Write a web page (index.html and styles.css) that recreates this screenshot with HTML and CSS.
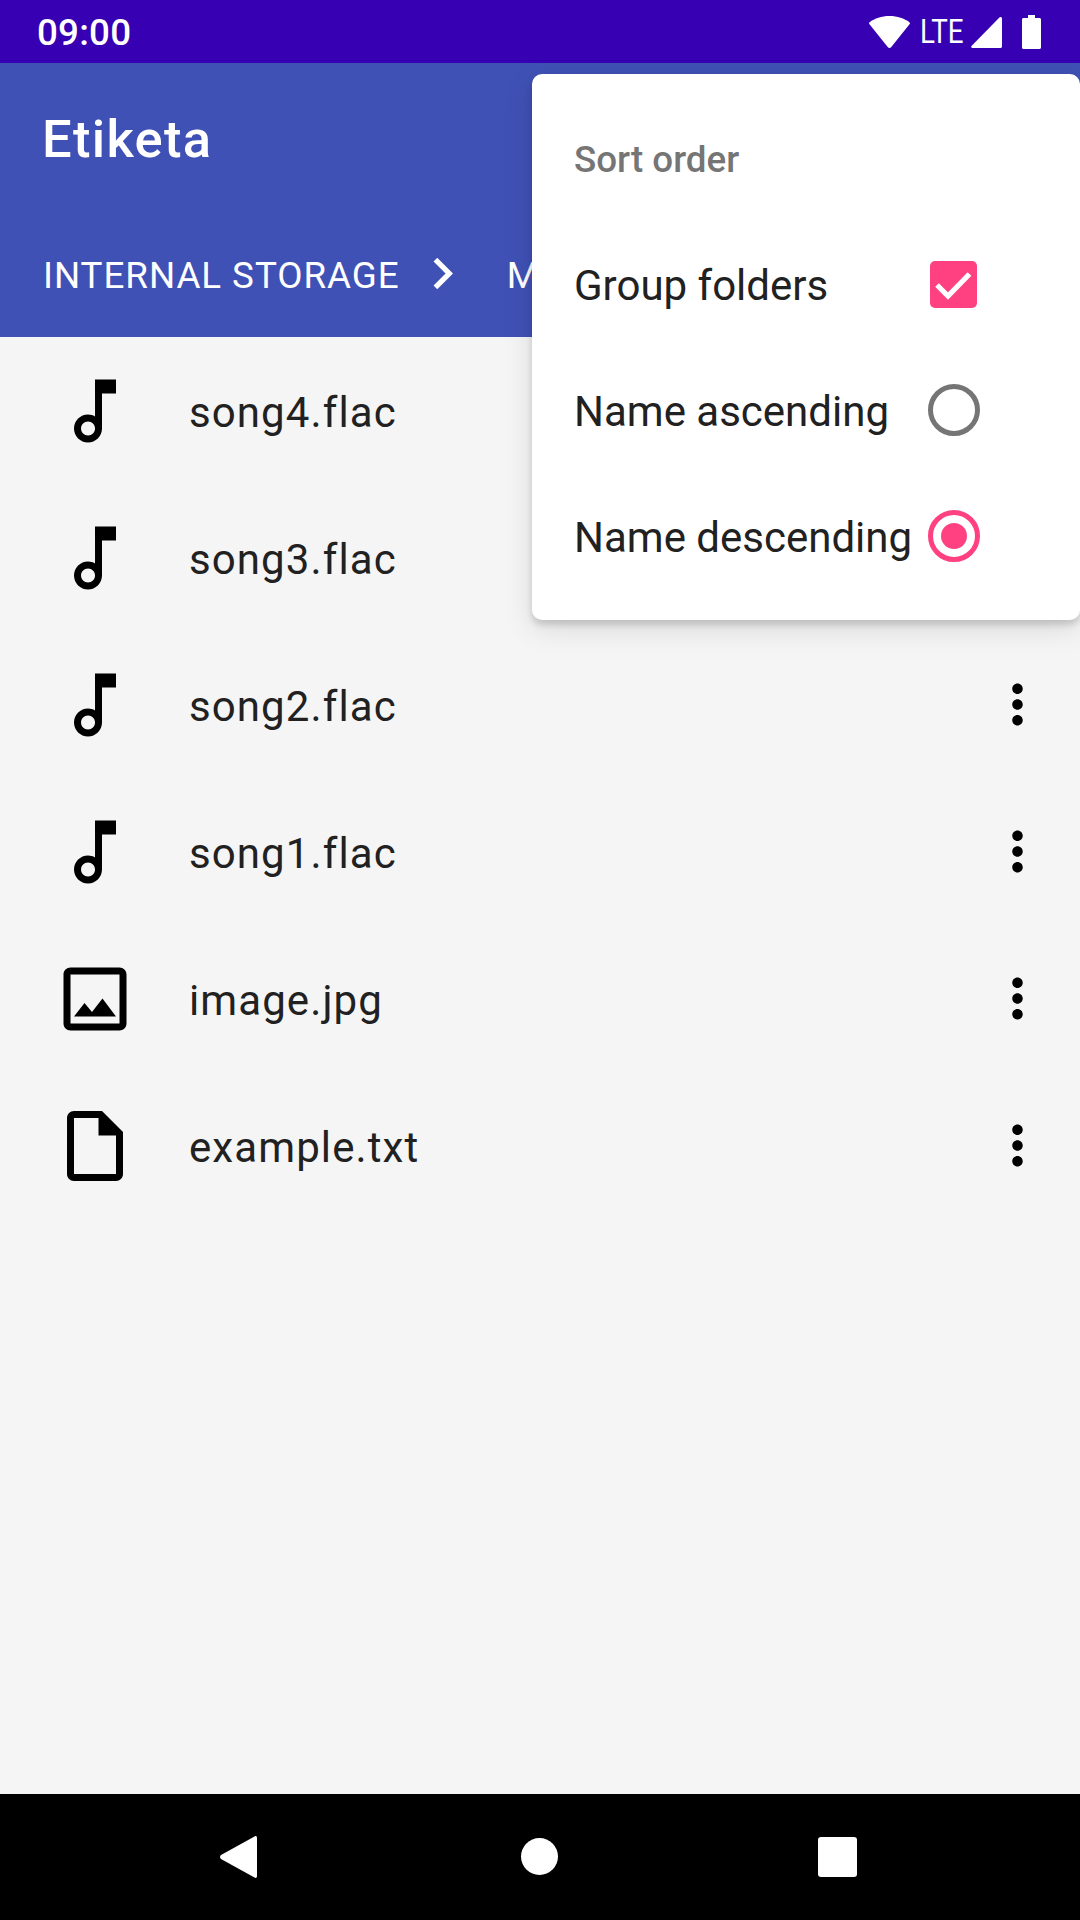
FILE: index.html
```html
<!DOCTYPE html>
<html lang="en">
	<head>

		<meta charset="UTF-8">
		<title>Etiketa</title>

		<link rel="stylesheet" href="styles.css">

	</head>
	<body>

		<div class="app">

			<div class="status-bar">
				<span class="status-time">09:00</span>
				<div class="status-icons">
					<svg class="icon-wifi" viewBox="0 0 41 32"><path d="M20.5 0C12.6 0 5.6 2.4.6 6.2c-.6.5-.7 1.2-.3 1.8l18.6 23.2c.8 1 2.4 1 3.2 0L40.700 8c.4-.6.3-1.300-.3-1.800C35.400 2.400 28.400 0 20.500 0z"/></svg>
					<span class="status-lte">LTE</span>
					<svg class="icon-signal" viewBox="0 0 31 31"><path d="M29.500 0c.8 0 1.500.7 1.500 1.500V29.500c0 .8-.7 1.500-1.500 1.500H1.500C.3 31-.3 29.800.5 29L28.400.5c.3-.3.7-.5 1.100-.5z"/></svg>
					<svg class="icon-battery" viewBox="0 0 19 34"><path d="M6 0h7v3h4.500c.8 0 1.500.7 1.500 1.500v28c0 .8-.7 1.500-1.500 1.500h-16C.7 34 0 33.300 0 32.500v-28C0 3.700.7 3 1.500 3H6z"/></svg>
				</div>
			</div>

			<div class="toolbar">
				<div class="toolbar-title">Etiketa</div>
				<div class="breadcrumbs">
					<span>INTERNAL STORAGE</span>
					<svg class="icon-next" viewBox="0 0 24 24"><path d="M10 6L8.590 7.410 13.170 12l-4.580 4.590L10 18l6-6z"/></svg>
					<span>MUSIC</span>
				</div>
			</div>

			<ul class="file-list">
				<li class="file-row">
					<svg class="file-icon" viewBox="0 0 24 24"><path d="M12 3l.010 10.550c-.590-.340-1.270-.550-2-.550C7.790 13 6 14.790 6 17s1.790 4 4 4 4-1.790 4-4V7h4V3h-6zm-1.990 16c-1.100 0-2-.900-2-2s.900-2 2-2 2 .900 2 2-.900 2-2 2z"/></svg>
					<span class="file-name">song4.flac</span>
				</li>
				<li class="file-row">
					<svg class="file-icon" viewBox="0 0 24 24"><path d="M12 3l.010 10.550c-.590-.340-1.270-.550-2-.550C7.790 13 6 14.790 6 17s1.790 4 4 4 4-1.790 4-4V7h4V3h-6zm-1.990 16c-1.100 0-2-.900-2-2s.900-2 2-2 2 .900 2 2-.900 2-2 2z"/></svg>
					<span class="file-name">song3.flac</span>
				</li>
				<li class="file-row">
					<svg class="file-icon" viewBox="0 0 24 24"><path d="M12 3l.010 10.550c-.590-.340-1.270-.550-2-.550C7.790 13 6 14.790 6 17s1.790 4 4 4 4-1.790 4-4V7h4V3h-6zm-1.990 16c-1.100 0-2-.900-2-2s.900-2 2-2 2 .900 2 2-.900 2-2 2z"/></svg>
					<span class="file-name">song2.flac</span>
					<svg class="more-icon" viewBox="0 0 24 24"><path d="M12 8c1.100 0 2-.900 2-2s-.900-2-2-2-2 .900-2 2 .900 2 2 2zm0 2c-1.100 0-2 .900-2 2s.900 2 2 2 2-.900 2-2-.900-2-2-2zm0 6c-1.100 0-2 .900-2 2s.900 2 2 2 2-.900 2-2-.900-2-2-2z"/></svg>
				</li>
				<li class="file-row">
					<svg class="file-icon" viewBox="0 0 24 24"><path d="M12 3l.010 10.550c-.590-.340-1.270-.550-2-.550C7.790 13 6 14.790 6 17s1.790 4 4 4 4-1.790 4-4V7h4V3h-6zm-1.990 16c-1.100 0-2-.900-2-2s.900-2 2-2 2 .900 2 2-.900 2-2 2z"/></svg>
					<span class="file-name">song1.flac</span>
					<svg class="more-icon" viewBox="0 0 24 24"><path d="M12 8c1.100 0 2-.900 2-2s-.900-2-2-2-2 .900-2 2 .900 2 2 2zm0 2c-1.100 0-2 .900-2 2s.900 2 2 2 2-.900 2-2-.900-2-2-2zm0 6c-1.100 0-2 .900-2 2s.900 2 2 2 2-.900 2-2-.900-2-2-2z"/></svg>
				</li>
				<li class="file-row">
					<svg class="file-icon" viewBox="0 0 24 24"><path d="M19 5v14H5V5h14m0-2H5c-1.100 0-2 .900-2 2v14c0 1.100.900 2 2 2h14c1.100 0 2-.900 2-2V5c0-1.100-.900-2-2-2zm-4.860 8.860l-3 3.870L9 13.140 6 17h12l-3.860-5.140z"/></svg>
					<span class="file-name">image.jpg</span>
					<svg class="more-icon" viewBox="0 0 24 24"><path d="M12 8c1.100 0 2-.900 2-2s-.900-2-2-2-2 .900-2 2 .900 2 2 2zm0 2c-1.100 0-2 .900-2 2s.900 2 2 2 2-.900 2-2-.900-2-2-2zm0 6c-1.100 0-2 .900-2 2s.900 2 2 2 2-.900 2-2-.900-2-2-2z"/></svg>
				</li>
				<li class="file-row">
					<svg class="file-icon" viewBox="0 0 24 24"><path d="M14 2H6c-1.100 0-1.990.900-1.990 2L4 20c0 1.100.890 2 1.990 2H18c1.100 0 2-.900 2-2V8l-6-6zM6 20V4h7v5h5v11H6z"/></svg>
					<span class="file-name">example.txt</span>
					<svg class="more-icon" viewBox="0 0 24 24"><path d="M12 8c1.100 0 2-.900 2-2s-.900-2-2-2-2 .900-2 2 .900 2 2 2zm0 2c-1.100 0-2 .900-2 2s.900 2 2 2 2-.900 2-2-.900-2-2-2zm0 6c-1.100 0-2 .900-2 2s.900 2 2 2 2-.900 2-2-.900-2-2-2z"/></svg>
				</li>
			</ul>

			<div class="nav-bar">
				<svg class="nav-back" viewBox="0 0 37 42"><path d="M34.500.4L1 19c-1.300 1-1.300 3 0 4l33.500 18.600c1.200.8 2.500.1 2.500-1.300V1.700c0-1.400-1.300-2.100-2.500-1.300z"/></svg>
				<span class="nav-home"></span>
				<span class="nav-recent"></span>
			</div>

			<!-- sort menu, over the toolbar -->
			<div class="sort-menu">
				<div class="menu-row menu-title"><span class="menu-label">Sort order</span></div>
				<div class="menu-row">
					<span class="menu-label">Group folders</span>
					<span class="menu-control">
						<svg class="check-box" viewBox="0 0 47 47"><rect width="47" height="47" rx="5" fill="#ff4081"/><path d="M7 24l11 11L39.500 13" fill="none" stroke="#fff" stroke-width="5.200"/></svg>
					</span>
				</div>
				<div class="menu-row">
					<span class="menu-label">Name ascending</span>
					<span class="menu-control"><span class="radio"></span></span>
				</div>
				<div class="menu-row">
					<span class="menu-label">Name descending</span>
					<span class="menu-control"><span class="radio radio-on"></span></span>
				</div>
			</div>

		</div>

	</body>
</html>
```

FILE: styles.css
```css
/* all */
* {
	margin: 0;
	padding: 0;
	box-sizing: border-box;
}

body {
	font-family: Roboto, "Liberation Sans", sans-serif;
}

.app {
	position: relative;
	display: flex;
	flex-direction: column;
	width: 1080px;
	height: 1920px;
	overflow: hidden;
	background-color: #f5f5f5;
}

/* status bar */
.status-bar {
	display: flex;
	align-items: center;
	justify-content: space-between;
	height: 63px;
	padding: 0 39px 0 37px;
	background-color: #3700b3;
	color: #fff;
}

.status-time {
	padding-top: 2px;
	font-size: 36.750px;
	font-weight: 500;
	letter-spacing: 0.2px;
}

.status-icons {
	display: flex;
	align-items: center;
}

.status-icons svg {
	display: block;
	fill: #fff;
}

.icon-wifi {
	width: 41px;
	height: 32px;
}

.status-lte {
	width: 43px;
	margin: 0 8px 0 10px;
	font-size: 33px;
	line-height: 32px;
	transform: scaleX(0.84);
	transform-origin: left center;
}

.icon-signal {
	width: 31px;
	height: 31px;
	margin-top: 2px;
}

.icon-battery {
	width: 19px;
	height: 34px;
	margin-left: 20px;
}

/* toolbar */
.toolbar {
	height: 274px;
	background-color: #3f51b5;
	color: #fff;
}

.toolbar-title {
	height: 147px;
	padding-left: 42px;
	font-size: 52.500px;
	font-weight: 500;
	letter-spacing: 1.300px;
	line-height: 152px;
}

.breadcrumbs {
	display: flex;
	align-items: center;
	height: 127px;
	padding: 4px 0 0 43px;
	font-size: 36.750px;
	letter-spacing: 0.950px;
	white-space: nowrap;
	overflow: hidden;
}

.icon-next {
	flex: none;
	width: 63px;
	height: 63px;
	margin: -4px 33px 0 11px;
	fill: #fff;
}

/* file list */
.file-list {
	flex: 1;
	list-style: none;
}

.file-row {
	display: flex;
	align-items: center;
	height: 147px;
	padding: 0 31.500px 0 53px;
}

.file-icon {
	flex: none;
	width: 84px;
	height: 84px;
	margin-right: 52px;
	fill: #000;
}

.file-name {
	padding-top: 4px;
	font-size: 42px;
	letter-spacing: 1.100px;
	color: #212121;
}

.more-icon {
	flex: none;
	width: 63px;
	height: 63px;
	margin-left: auto;
	fill: #000;
}

/* nav bar */
.nav-bar {
	position: relative;
	height: 126px;
	background-color: #000;
}

.nav-back {
	position: absolute;
	left: 220px;
	top: 42px;
	width: 37px;
	height: 42px;
	fill: #fff;
}

.nav-home {
	position: absolute;
	left: 521px;
	top: 44px;
	width: 37px;
	height: 37px;
	border-radius: 50%;
	background-color: #fff;
}

.nav-recent {
	position: absolute;
	left: 818px;
	top: 43px;
	width: 39px;
	height: 40px;
	border-radius: 3px;
	background-color: #fff;
}

/* sort menu */
.sort-menu {
	position: absolute;
	left: 532px;
	top: 74px;
	width: 548px;
	padding: 21px 0;
	border-radius: 10px;
	background-color: #fff;
	box-shadow: 0 5px 6px rgba(0, 0, 0, 0.14), 0 8px 30px rgba(0, 0, 0, 0.12);
}

.menu-row {
	display: flex;
	align-items: center;
	height: 126px;
	padding: 0 94.500px 0 42px;
	font-size: 42px;
	color: #212121;
}

.menu-label {
	padding-top: 2px;
}

.menu-title {
	font-size: 36.750px;
	font-weight: 500;
	color: #757575;
}

.menu-control {
	display: flex;
	align-items: center;
	justify-content: center;
	flex: none;
	width: 63px;
	height: 63px;
	margin-left: auto;
}

.check-box {
	display: block;
	width: 47px;
	height: 47px;
	margin-left: -1px;
}

.radio {
	display: flex;
	align-items: center;
	justify-content: center;
	width: 52px;
	height: 52px;
	border: 5.250px solid #757575;
	border-radius: 50%;
}

.radio-on {
	border-color: #ff4081;
}

.radio-on::after {
	content: "";
	width: 26px;
	height: 26px;
	border-radius: 50%;
	background-color: #ff4081;
}
```
